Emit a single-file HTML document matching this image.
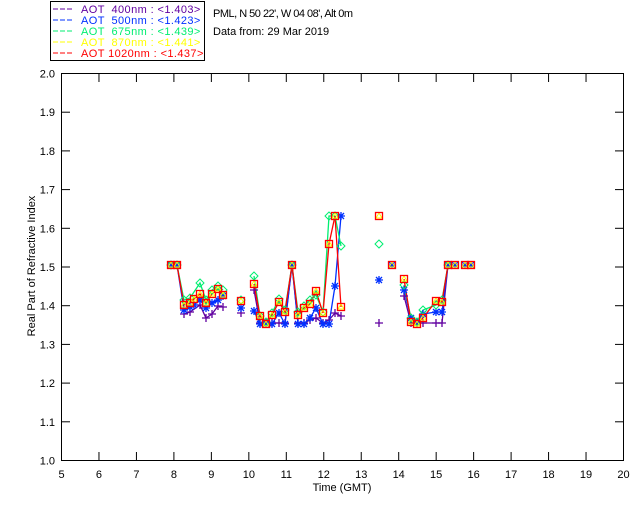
<!DOCTYPE html>
<html><head><meta charset="utf-8"><style>
html,body{margin:0;padding:0;background:#fff;width:640px;height:512px;overflow:hidden}
svg text{font-family:"Liberation Sans",sans-serif;font-size:11px}
</style></head><body>
<svg id="s" width="640" height="512" xmlns="http://www.w3.org/2000/svg">
<rect x="50.5" y="1.5" width="154" height="59" fill="#fff" stroke="#000"/>
<g font-size="11" letter-spacing="0.4">
<line x1="53" y1="9" x2="74" y2="9" stroke="#6000a0" stroke-dasharray="5,2"/><text x="81" y="13" fill="#6000a0" xml:space="preserve">AOT  400nm : &lt;1.403&gt;</text>
<line x1="53" y1="20" x2="74" y2="20" stroke="#0030ff" stroke-dasharray="5,2"/><text x="81" y="24" fill="#0030ff" xml:space="preserve">AOT  500nm : &lt;1.423&gt;</text>
<line x1="53" y1="31" x2="74" y2="31" stroke="#00ee70" stroke-dasharray="5,2"/><text x="81" y="35" fill="#00ee70" xml:space="preserve">AOT  675nm : &lt;1.439&gt;</text>
<line x1="53" y1="42" x2="74" y2="42" stroke="#ffff00" stroke-dasharray="5,2"/><text x="81" y="46" fill="#ffff00" xml:space="preserve">AOT  870nm : &lt;1.441&gt;</text>
<line x1="53" y1="53" x2="74" y2="53" stroke="#ff0000" stroke-dasharray="5,2"/><text x="81" y="57" fill="#ff0000" xml:space="preserve">AOT 1020nm : &lt;1.437&gt;</text>
</g>
<text x="213" y="17" textLength="140">PML, N 50 22', W 04 08', Alt 0m</text>
<text x="213" y="35">Data from: 29 Mar 2019</text>
<rect x="61.5" y="73.5" width="562" height="387" fill="none" stroke="#000"/>
<g id="ax"></g>
<text x="342" y="491" text-anchor="middle">Time (GMT)</text>
<text transform="translate(35,266) rotate(-90)" text-anchor="middle">Real Part of Refractive Index</text>
<g id="d"></g>
</svg>
<script>
var ns="http://www.w3.org/2000/svg",ax=document.getElementById('ax'),d=document.getElementById('d');
function el(t,a,p){var e=document.createElementNS(ns,t);for(var k in a)e.setAttribute(k,a[k]);(p||d).appendChild(e);return e}
for(var h=5;h<=20;h++){var x=61.5+(h-5)*562/15;
 if(h>5&&h<20){el('line',{x1:x,y1:74,x2:x,y2:82,stroke:'#000'},ax);el('line',{x1:x,y1:460,x2:x,y2:452,stroke:'#000'},ax);}
 var t=el('text',{x:x,y:478,'text-anchor':'middle'},ax);t.textContent=h;}
for(var i=0;i<=10;i++){var y=460.5-i*38.7;
 if(i>0&&i<10){el('line',{x1:62,y1:y,x2:70,y2:y,stroke:'#000'},ax);el('line',{x1:623,y1:y,x2:615,y2:y,stroke:'#000'},ax);}
 var t=el('text',{x:55,y:y+4,'text-anchor':'end'},ax);t.textContent=(1+i/10).toFixed(1);}
var red=[[[171,265],[177,265],[184,305],[190,303],[194,299],[200,294],[206,303],[212,294],[218,289],[223,295]],[[241,301]],[[254,284],[260,316],[266,324],[272,315],[279,302],[285,312],[292,265],[298,315],[304,308],[310,304],[316,291],[323,313],[329,244],[335,216],[341,307]],[[379,216]],[[392,265]],[[404,279],[411,322],[417,324],[423,318],[436,301],[442,302],[448,265],[455,265]],[[465,265],[471,265]]];
var blue=[[[171,265],[177,265],[184,310],[190,307],[194,305],[200,300],[206,308],[212,303],[218,300],[223,296]],[[241,308]],[[254,311],[260,324],[266,324],[272,324],[279,313],[285,324],[292,265],[298,324],[304,324],[310,318],[316,308],[323,324],[329,324],[335,286],[341,216]],[[379,280]],[[392,265]],[[404,290],[411,318],[417,322],[423,314],[436,312],[442,312],[448,265],[455,265]],[[465,265],[471,265]]];
var pur=[[[184,314],[190,312],[200,305],[206,318],[212,314],[218,306],[223,307]],[[241,313]],[[254,290],[260,323],[266,323],[272,323],[279,323],[285,323],[292,265],[298,323],[304,323],[310,320],[316,318],[323,323],[329,320],[335,313],[341,316]],[[379,323]],[[404,296],[411,323],[417,323],[423,323],[436,323],[442,323],[448,265]]];
var grn=[[[171,265],[177,265],[184,300],[190,298],[200,283],[206,300],[212,290],[218,286],[223,290]],[[241,300]],[[254,276],[260,316],[266,322],[272,313],[279,299],[285,310],[292,265],[298,312],[304,306],[310,300],[316,295],[323,312],[329,216],[335,216],[341,246]],[[379,244]],[[404,285],[411,318],[417,322],[423,310],[436,305],[442,300],[448,265]]];
function line(S,c){S.forEach(function(s){if(s.length>1)el('polyline',{points:s.join(' '),fill:'none',stroke:c,'stroke-width':1.3});});}
line(pur,'#6000a0');line(blue,'#0030ff');line(grn,'#00ee70');line(red,'#ff0000');
pur.forEach(function(s){s.forEach(function(p){el('path',{d:'M'+(p[0]-4)+' '+p[1]+'h8M'+p[0]+' '+(p[1]-4)+'v8',stroke:'#6000a0','stroke-width':1.3});});});
blue.forEach(function(s){s.forEach(function(p){el('path',{d:'M'+(p[0]-4)+' '+p[1]+'h8M'+p[0]+' '+(p[1]-4)+'v8M'+(p[0]-3)+' '+(p[1]-3)+'l6 6M'+(p[0]+3)+' '+(p[1]-3)+'l-6 6',stroke:'#0030ff','stroke-width':1.3});});});
grn.forEach(function(s){s.forEach(function(p){el('path',{d:'M'+p[0]+' '+(p[1]-4)+'l4 4-4 4-4-4z',fill:'none',stroke:'#00ee70'});});});
red.forEach(function(s){s.forEach(function(p){el('path',{d:'M'+p[0]+' '+(p[1]-3)+'l3 5h-6z',fill:'none',stroke:'#ffff00'});el('rect',{x:p[0]-3.5,y:p[1]-3.5,width:7,height:7,fill:'none',stroke:'#ff0000','stroke-width':1.3});});});
</script>
</body></html>
